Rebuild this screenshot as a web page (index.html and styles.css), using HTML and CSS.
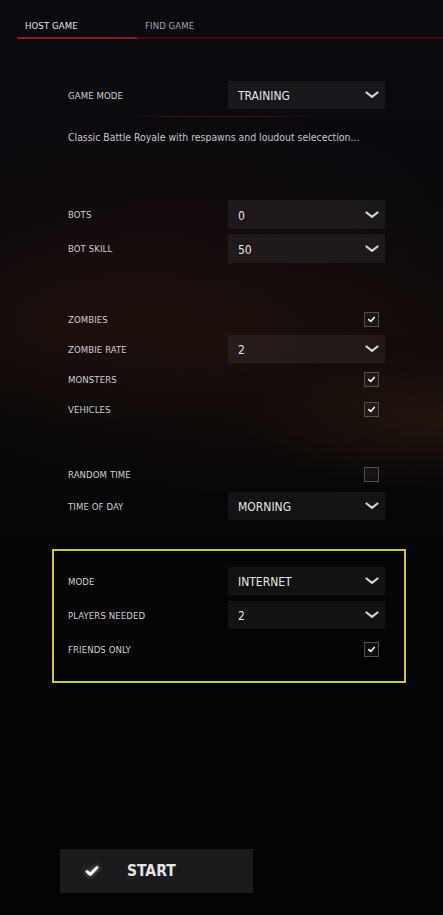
FILE: index.html
```html
<!DOCTYPE html>
<html>
<head>
<meta charset="utf-8">
<link rel="stylesheet" href="styles.css">
</head>
<body>
<div class="screen">
  <nav class="tabs">
    <div class="tab active">HOST GAME</div>
    <div class="tab">FIND GAME</div>
  </nav>

  <main class="settings">
    <section class="group group-mode">
      <div class="row">
        <span class="label">GAME MODE</span>
        <div class="select"><span class="value">TRAINING</span><svg class="chev" viewBox="0 0 14 8"><path d="M1.5 1.5 L7 5.8 L12.5 1.5"/></svg></div>
      </div>
      <div class="glow-line"></div>
      <p class="desc">Classic Battle Royale with respawns and loudout selecection...</p>
    </section>

    <section class="group group-bots">
      <div class="row tall">
        <span class="label">BOTS</span>
        <div class="select"><span class="value">0</span><svg class="chev" viewBox="0 0 14 8"><path d="M1.5 1.5 L7 5.8 L12.5 1.5"/></svg></div>
      </div>
      <div class="row tall">
        <span class="label">BOT SKILL</span>
        <div class="select"><span class="value">50</span><svg class="chev" viewBox="0 0 14 8"><path d="M1.5 1.5 L7 5.8 L12.5 1.5"/></svg></div>
      </div>
    </section>

    <section class="group group-world">
      <div class="row">
        <span class="label">ZOMBIES</span>
        <span class="check on"><svg viewBox="0 0 10 10"><path d="M2 5.2 L4.2 7.2 L8 2.8"/></svg></span>
      </div>
      <div class="row">
        <span class="label">ZOMBIE RATE</span>
        <div class="select"><span class="value">2</span><svg class="chev" viewBox="0 0 14 8"><path d="M1.5 1.5 L7 5.8 L12.5 1.5"/></svg></div>
      </div>
      <div class="row">
        <span class="label">MONSTERS</span>
        <span class="check on"><svg viewBox="0 0 10 10"><path d="M2 5.2 L4.2 7.2 L8 2.8"/></svg></span>
      </div>
      <div class="row">
        <span class="label">VEHICLES</span>
        <span class="check on"><svg viewBox="0 0 10 10"><path d="M2 5.2 L4.2 7.2 L8 2.8"/></svg></span>
      </div>
    </section>

    <section class="group group-time">
      <div class="row">
        <span class="label">RANDOM TIME</span>
        <span class="check"></span>
      </div>
      <div class="row">
        <span class="label">TIME OF DAY</span>
        <div class="select"><span class="value">MORNING</span><svg class="chev" viewBox="0 0 14 8"><path d="M1.5 1.5 L7 5.8 L12.5 1.5"/></svg></div>
      </div>
    </section>

    <section class="group group-net">
      <div class="row">
        <span class="label">MODE</span>
        <div class="select"><span class="value">INTERNET</span><svg class="chev" viewBox="0 0 14 8"><path d="M1.5 1.5 L7 5.8 L12.5 1.5"/></svg></div>
      </div>
      <div class="row">
        <span class="label">PLAYERS NEEDED</span>
        <div class="select"><span class="value">2</span><svg class="chev" viewBox="0 0 14 8"><path d="M1.5 1.5 L7 5.8 L12.5 1.5"/></svg></div>
      </div>
      <div class="row">
        <span class="label">FRIENDS ONLY</span>
        <span class="check on"><svg viewBox="0 0 10 10"><path d="M2 5.2 L4.2 7.2 L8 2.8"/></svg></span>
      </div>
    </section>
  </main>

  <button class="start">
    <svg class="start-icon" viewBox="0 0 14 12"><path d="M2 6.5 L5.2 9.4 L12 2.6"/></svg>
    <span>START</span>
  </button>
</div>
</body>
</html>
```

FILE: styles.css
```css
* { box-sizing: border-box; }

html, body {
  margin: 0;
  padding: 0;
  height: 100%;
}

body {
  background:
    radial-gradient(ellipse 200px 70px at 440px 420px, rgba(60, 34, 18, 0.4), rgba(60, 34, 18, 0) 100%),
    radial-gradient(ellipse 260px 110px at 60px 320px, rgba(45, 22, 14, 0.35), rgba(45, 22, 14, 0) 100%),
    radial-gradient(ellipse 360px 160px at 260px 340px, rgba(38, 20, 14, 0.55), rgba(38, 20, 14, 0) 100%),
    radial-gradient(ellipse 300px 110px at 150px 210px, rgba(26, 10, 13, 0.45), rgba(26, 10, 13, 0) 100%),
    linear-gradient(#0a0a10 0px, #0a0a0e 160px, #0b0909 300px, #080707 460px, #050505 560px, #040404 915px);
  font-family: "DejaVu Sans Condensed", "DejaVu Sans", sans-serif;
  color: #c4c4c4;
}

.screen {
  width: 443px;
  min-height: 915px;
}

/* Tabs */
.tabs {
  display: flex;
  margin-left: 17px;
  border-bottom: 2px solid #3e0b12;
}

.tab {
  width: 120px;
  padding: 20px 0 5px 8px;
  font-size: 9.5px;
  line-height: 12px;
  color: #a5a5a8;
  letter-spacing: 0.1px;
}

.tab.active {
  color: #e4e4e4;
  border-bottom: 2px solid #8d1b23;
  margin-bottom: -2px;
}

/* Settings */
.settings {
  padding: 0 58px 0 68px;
}

.group {
  display: flex;
  flex-direction: column;
}

.group-mode { margin-top: 42px; }
.group-bots { margin-top: 56px; gap: 5px; }
.group-world { margin-top: 42px; gap: 2px; }
.group-time { margin-top: 37px; gap: 4px; }

.group-net {
  margin: 29px -21px 0 -16px;
  padding: 16px 19px 18px 14px;
  border: 2px solid #c9c936;
  gap: 6px;
}

.row {
  display: flex;
  align-items: center;
  justify-content: space-between;
  height: 28px;
}

.row.tall { height: 29px; }

.label {
  font-size: 9.5px;
  color: #cfcfd1;
  letter-spacing: 0.1px;
}

.select {
  width: 157px;
  height: 100%;
  background: rgba(255, 255, 255, 0.055);
  display: flex;
  align-items: center;
  justify-content: space-between;
  padding: 0 6px 0 10px;
}

.value {
  font-size: 12px;
  color: #e6e6e6;
  padding-top: 2px;
}

.chev {
  width: 14px;
  height: 8px;
}

.chev path {
  fill: none;
  stroke: #d2d2d2;
  stroke-width: 2.2;
  stroke-linecap: round;
  stroke-linejoin: round;
}

.check {
  width: 15px;
  height: 15px;
  margin-right: 6px;
  border: 1px solid #505050;
  background: rgba(255, 255, 255, 0.04);
  display: flex;
  align-items: center;
  justify-content: center;
}

.check svg {
  width: 9px;
  height: 9px;
}

.check svg path {
  fill: none;
  stroke: #f2f2f2;
  stroke-width: 1.9;
  stroke-linecap: round;
  stroke-linejoin: round;
}

.glow-line {
  margin: 7px 0 0 57px;
  width: 195px;
  height: 1px;
  background: linear-gradient(90deg, rgba(90, 12, 28, 0), rgba(90, 12, 28, 0.9) 30%, rgba(90, 12, 28, 0.9) 70%, rgba(90, 12, 28, 0));
}

.desc {
  margin: 13px 0 0 0;
  font-size: 10.4px;
  line-height: 14px;
  color: #c6c6c6;
}

/* Start button */
.start {
  display: flex;
  align-items: center;
  margin: 166px 0 0 60px;
  width: 193px;
  height: 44px;
  padding: 0 0 0 25px;
  border: none;
  background: #1b1b1d;
  font-family: "DejaVu Sans Condensed", "DejaVu Sans", sans-serif;
  font-size: 15.5px;
  font-weight: bold;
  color: #e4e4e4;
}

.start-icon {
  width: 14px;
  height: 12px;
  margin-right: 28px;
  filter: drop-shadow(0 0 2px rgba(255, 255, 255, 0.6));
}

.start-icon path {
  fill: none;
  stroke: #ffffff;
  stroke-width: 2.8;
  stroke-linecap: round;
  stroke-linejoin: round;
}
```
